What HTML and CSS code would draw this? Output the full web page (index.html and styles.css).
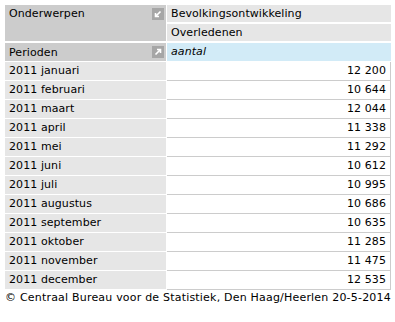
FILE: index.html
```html
<!DOCTYPE html>
<html>
<head>
<meta charset="utf-8">
<link rel="stylesheet" href="styles.css">
</head>
<body>
<table class="tbl">
  <tr>
    <th class="corner" rowspan="2"><div class="hd"><span>Onderwerpen</span><span class="ico"><svg width="12" height="12" viewBox="0 0 12 12"><path d="M8.5 3.5 L3.5 8.5 M3.5 5 V8.5 H7" stroke="#fff" stroke-width="1.6" fill="none"/></svg></span></div></th>
    <th class="topic">Bevolkingsontwikkeling</th>
  </tr>
  <tr>
    <th class="topic">Overledenen</th>
  </tr>
  <tr>
    <th class="corner per"><div class="hd"><span>Perioden</span><span class="ico"><svg width="12" height="12" viewBox="0 0 12 12"><path d="M3.5 8.5 L8.5 3.5 M5 3.5 H8.5 V7" stroke="#fff" stroke-width="1.6" fill="none"/></svg></span></div></th>
    <th class="unit">aantal</th>
  </tr>
  <tr><th class="rh">2011 januari</th><td>12 200</td></tr>
  <tr><th class="rh">2011 februari</th><td>10 644</td></tr>
  <tr><th class="rh">2011 maart</th><td>12 044</td></tr>
  <tr><th class="rh">2011 april</th><td>11 338</td></tr>
  <tr><th class="rh">2011 mei</th><td>11 292</td></tr>
  <tr><th class="rh">2011 juni</th><td>10 612</td></tr>
  <tr><th class="rh">2011 juli</th><td>10 995</td></tr>
  <tr><th class="rh">2011 augustus</th><td>10 686</td></tr>
  <tr><th class="rh">2011 september</th><td>10 635</td></tr>
  <tr><th class="rh">2011 oktober</th><td>11 285</td></tr>
  <tr><th class="rh">2011 november</th><td>11 475</td></tr>
  <tr><th class="rh">2011 december</th><td>12 535</td></tr>
</table>
<p class="foot">© Centraal Bureau voor de Statistiek, Den Haag/Heerlen 20-5-2014</p>
</body>
</html>
```

FILE: styles.css
```css
body {
  margin: 0;
  padding: 5px 4px 0 5px;
  font-family: "DejaVu Sans", Verdana, sans-serif;
  font-size: 11px;
  letter-spacing: 0.08px;
  color: #000;
  background: #fff;
}
.tbl {
  border-collapse: separate;
  border-spacing: 0;
  width: 386px;
}
.tbl th, .tbl td {
  font-weight: normal;
  text-align: left;
  padding: 0 4px;
  height: 17px;
  line-height: 17px;
  white-space: nowrap;
}
.tbl .corner {
  background: #cccccc;
  width: 155px;
  vertical-align: top;
  border-right: 1px solid #fff;
  border-bottom: 2px solid #fff;
  padding-right: 2px;
}
.tbl .per {
  height: 18px;
  border-bottom: 1px solid #fff;
}
.hd {
  display: flex;
  justify-content: space-between;
  align-items: center;
  height: 17px;
}
.per .hd { height: 18px; }
.ico {
  width: 12px;
  height: 12px;
  background: #a6a6a6;
  display: block;
}
.ico svg { display: block; }
.topic {
  background: #e6e6e6;
  border-bottom: 2px solid #fff;
}
.tbl .unit {
  background: #d2ebf7;
  font-style: italic;
  border-bottom: 1px solid #fff;
  height: 18px;
  line-height: 18px;
}
.tbl .rh {
  background: #e6e6e6;
  border-right: 1px solid #fff;
  border-bottom: 1px solid #fff;
  height: 18px;
  line-height: 18px;
}
.tbl td {
  text-align: right;
  border-bottom: 1px solid #cccccc;
  border-right: 1px solid #cccccc;
  padding-right: 4px;
  height: 18px;
  line-height: 18px;
}
.foot {
  margin: 0;
  line-height: 16px;
  letter-spacing: 0.2px;
}
```
